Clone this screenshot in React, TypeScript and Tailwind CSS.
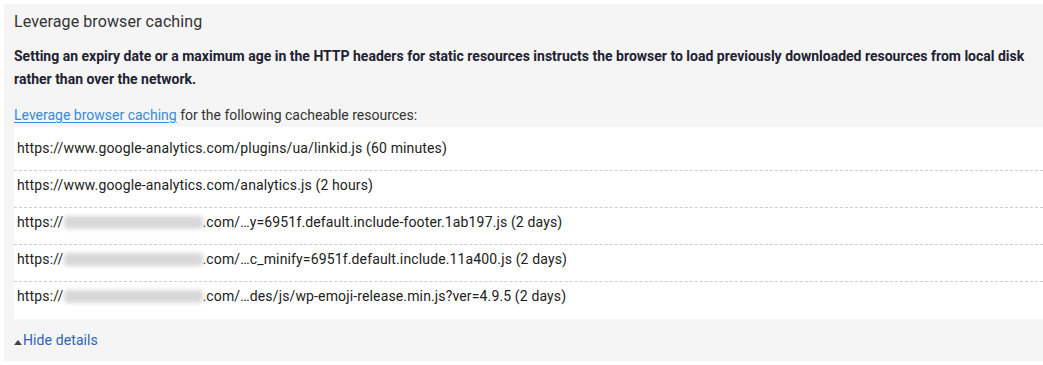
import React from 'react';

const resources: { pre: string; blurred?: boolean; post: string }[] = [
  { pre: 'https://www.google-analytics.com/plugins/ua/linkid.js (60 minutes)', post: '' },
  { pre: 'https://www.google-analytics.com/analytics.js (2 hours)', post: '' },
  { pre: 'https://', blurred: true, post: '.com/…y=6951f.default.include-footer.1ab197.js (2 days)' },
  { pre: 'https://', blurred: true, post: '.com/…c_minify=6951f.default.include.11a400.js (2 days)' },
  { pre: 'https://', blurred: true, post: '.com/…des/js/wp-emoji-release.min.js?ver=4.9.5 (2 days)' },
];

export default function App() {
  return (
    <div className="bg-white w-[1043px] h-[365px] pt-1 pl-1 overflow-hidden" style={{ fontFamily: 'Roboto, "Liberation Sans", sans-serif' }}>
      <section className="bg-[#f5f5f5] h-[357px] pl-[10px] pt-[6px]">
        <h3 className="text-[16px] leading-[24px] text-[#333] tracking-[0.1px]">Leverage browser caching</h3>

        <p className="mt-[11px] text-[14px] leading-[23px] font-bold text-[#212131] pr-4">
          Setting an expiry date or a maximum age in the HTTP headers for static resources instructs the browser to load previously downloaded resources from local disk rather than over the network.
        </p>

        <p className="mt-[14px] text-[14px] leading-[20px] text-[#333]">
          <a href="#" className="text-[#3a8ad8] underline underline-offset-2">Leverage browser caching</a> for the following cacheable resources:
        </p>

        <ul className="bg-white pt-[7px] pb-[1px] mt-[2px]">
          {resources.map((r, i) => (
            <li
              key={i}
              className={`pl-[3px] pt-[4px] pb-[12px] text-[14px] leading-[20px] text-[#212121] tracking-[0.14px] whitespace-nowrap ${i < resources.length - 1 ? 'border-b border-dashed border-[#cccccc]' : ''}`}
            >
              {r.pre}
              {r.blurred && (
                <span className="inline-block align-middle w-[139px] h-[13px] -mt-[2px] bg-[#d8d8d8] blur-[2px] rounded-sm" />
              )}
              {r.post}
            </li>
          ))}
        </ul>

        <div className="mt-[11px] flex items-center text-[14px] leading-[20px]">
          <span className="w-0 h-0 border-l-[4px] border-r-[4px] border-b-[5px] border-l-transparent border-r-transparent border-b-[#444] mt-[4px]" />
          <a href="#" className="text-[#2f62b8] ml-[1px] tracking-[0.1px]">Hide details</a>
        </div>
      </section>
    </div>
  );
}
